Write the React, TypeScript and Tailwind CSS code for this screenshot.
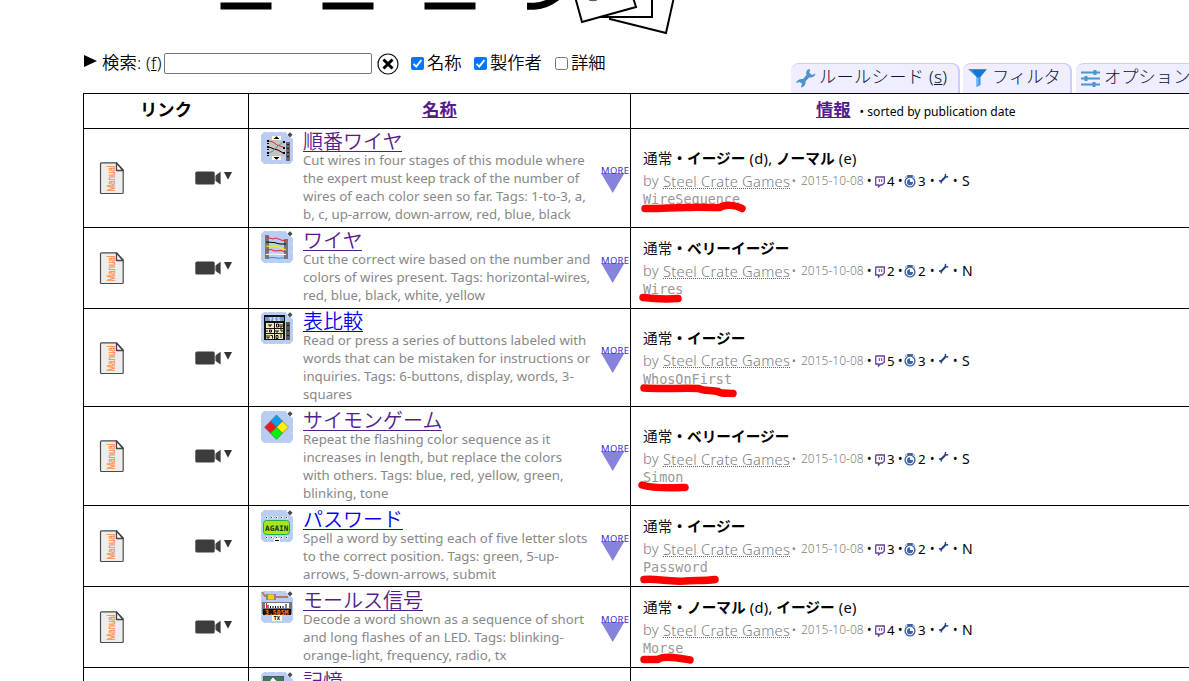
import React from "react";

type Diff = { name: string; mark?: string };
type Mod = {
  title: string;
  visited: boolean;
  height: string;
  pad: string;
  lines: string[];
  diffs: Diff[];
  twitch: string;
  timer: string;
  rule: string;
  id: string;
  stroke: string;
  icon: React.ReactNode;
};

const Manual = () => (
  <svg width="24" height="32" viewBox="0 0 24 32" className="shrink-0 overflow-visible">
    <path d="M1.500 .8h15L23.200 8v22.500a1 1 0 0 1-1 1H1.500a1 1 0 0 1-1-1V1.800a1 1 0 0 1 1-1Z" fill="#ededed" stroke="#4a4a4a" strokeWidth="1.200" />
    <path d="M16.500 1v7.500H23Z" fill="#fff" stroke="#444" strokeWidth="1.300" strokeLinejoin="round" />
    <text transform="translate(14.500 29.500) rotate(-90)" fontFamily="Liberation Sans, sans-serif" fontSize="11" textLength="26" lengthAdjust="spacingAndGlyphs" fill="#ff8a45" stroke="#ff8a45" strokeWidth=".3">Manual</text>
  </svg>
);

const Camera = () => (
  <svg width="38" height="16" viewBox="0 0 38 16" className="shrink-0">
    <rect x="0.3" y="1.600" width="19.400" height="13" rx="1.600" fill="#3c3c3c" />
    <path d="M19.800 6 25.600 1.800v12.800L19.800 10.400Z" fill="#3c3c3c" />
    <path d="M20.600 3v11" stroke="#fff" strokeOpacity=".5" />
    <path d="M29 2h8l-4 7.800Z" fill="#333" />
  </svg>
);

const Tile = ({ children }: { children: React.ReactNode }) => (
  <svg width="32" height="32" viewBox="0 0 32 32" className="shrink-0">
    <path d="M3 0h22l1.500 4L32 7v22l-3 3H3l-3-3V3Z" fill="#b9cdf2" />
    <path d="M1 .5h24M.5 2v28M2 31.500h28M31.500 8v22" stroke="#fff" strokeOpacity=".55" strokeDasharray="1 7" strokeDashoffset="3" />
    {children}
    <path d="m29 .2 2.600 2.600L29 5.400l-2.600-2.600Z" fill="#4b4d55" />
  </svg>
);

const icons = {
  sequence: (
    <Tile>
      <rect x="6" y="8" width="18" height="16" fill="#c4c4c4" />
      <path d="M11 4h9v4h-9zM11 24h9v4h-9z" fill="#fffbe6" />
      <path d="M12.500 7h6l-3-2.800zM12.500 25h6l-3 2.800z" fill="#000" />
      <path d="m8 9 4 1 4 3 6 2" stroke="#e8242c" fill="none" />
      <path d="m8 15 5 2 4 1 5 3" stroke="#000" fill="none" />
      <path d="m8 21 4-2 5-5 5-4" stroke="#13a0e2" fill="none" />
      <path d="M7 8v4M7 14v4M7 20v4M23 9v3M23 15v3M23 20v3" stroke="#000" strokeWidth="2" strokeDasharray="2 1" />
      <path d="M25 10h4v19h-4z" fill="#666" />
      <path d="M27 12v15" stroke="#111" strokeWidth="2" strokeDasharray="1 3" />
    </Tile>
  ),
  wires: (
    <Tile>
      <path d="M4 4h4v24H4zM23 8h4v20h-4z" fill="#757575" />
      <path d="m5 6 7 2 3-1 5 2 5 1" stroke="#e8242c" fill="none" />
      <path d="m5 11 8 .5 6 1.500h6" stroke="#000" fill="none" />
      <path d="m5 15 5 1 5-1 5 2 5 2" stroke="#ffee00" strokeWidth="1.200" fill="none" />
      <path d="m5 19 5-.5 4 1.500 6-.5 5 1.500" stroke="#e8242c" fill="none" />
      <path d="m5 23.500 8-.5 6 .5h6" stroke="#fff" fill="none" />
      <path d="m5 27 7-.5 6 .8 7-.8" stroke="#139ddd" fill="none" />
    </Tile>
  ),
  words: (
    <Tile>
      <path d="M3 3h21v7H3zM3 10h21v18H3z" fill="#111" />
      <path d="M4 5h19v4H4z" fill="#7197cf" />
      <text x="8" y="8.900" fontFamily="DejaVu Sans Mono, monospace" fontSize="5" fontWeight="700" textLength="11" fill="#fff">YES</text>
      <path d="M5 11h8v5H5zM14 11h8v5h-8zM5 17h8v4H5zM14 17h8v4h-8zM5 22h8v5H5zM14 22h8v5h-8z" fill="#f6e7b6" />
      <path d="M8 12v2h2v-2M15.500 12h2v3h-2zM19 12v3h2v-3M6 18v2M8.500 18h2v2h-2zM15 18v2h2v-2M19 18h2v2M6 23v3h2v-3M9.500 23.500h2v3M15 23.500h2v3h-2zM20 22v4" fill="none" stroke="#111" />
      <path d="M25 10h4v18h-4z" fill="#555" />
      <path d="M27 13v12" stroke="#111" strokeWidth="2" strokeDasharray="1 4" />
    </Tile>
  ),
  simon: (
    <Tile>
      <g stroke="#555" strokeWidth=".5">
        <path d="m15.500 4 6 6-6 6-6-6Z" fill="#0aa0ea" />
        <path d="m9.500 10.200 6 6-6 6-6-6Z" fill="#ee1823" />
        <path d="m21.500 10.200 6 6-6 6-6-6Z" fill="#fff200" />
        <path d="m15.500 16.400 6 6-6 6-6-6Z" fill="#08f208" />
      </g>
    </Tile>
  ),
  password: (
    <Tile>
      <path d="M5 7.500h22M5 27.500h22" stroke="#fffbe6" strokeWidth="2" strokeDasharray="2 3" />
      <path d="M5 7.500h22M5 27.500h22" stroke="#333" strokeDasharray="1 4" />
      <rect x="2.500" y="10.500" width="26" height="14" rx="3" fill="#a8e51c" stroke="#21ad4a" />
      <text x="4" y="20.500" fontFamily="DejaVu Sans Mono, monospace" fontSize="7.500" fontWeight="700" textLength="23.500" lengthAdjust="spacingAndGlyphs" fill="#143510">AGAIN</text>
      <path d="M13 28h6v4h-6z" fill="#fffbe6" />
      <path d="M14 30.500h4" stroke="#000" />
    </Tile>
  ),
  morse: (
    <Tile>
      <path d="m1 1 3 4h4M14 6h13" stroke="#b97a57" strokeWidth="2" fill="none" />
      <path d="M5 3h10v6H5z" fill="#888" />
      <path d="M7 3.500h6v5H7z" fill="#ffc90e" />
      <path d="M1 11h30v12H1z" fill="#777" />
      <path d="M4 12h24v5H4z" fill="#fff" />
      <path d="M7 14v3M9.500 15v2M12 15v2M14.500 15v2M17 15v2M19.500 15v2M22 15v2M25 13v4" stroke="#000" />
      <path d="M5.500 12v5" stroke="#ee1c24" />
      <path d="M2 18h28v6H2z" fill="#111" />
      <text x="4" y="23.500" fontFamily="DejaVu Sans Mono, monospace" fontSize="7" fontWeight="700" textLength="23.500" lengthAdjust="spacingAndGlyphs" fill="#ff7f27">3.505M</text>
      <path d="M11 24h10v6H11z" fill="#fffbe6" />
      <text x="12.500" y="29" fontFamily="DejaVu Sans Mono, monospace" fontSize="5.500" fontWeight="700" fill="#000">TX</text>
    </Tile>
  ),
  memory: (
    <Tile>
      <path d="M2 4h21v28H2z" fill="#555" />
      <path d="M3 5h19v27H3z" fill="#3f785c" />
      <path d="M12 6v8M10 9l2-2 3 3" stroke="#fff" strokeWidth="2" fill="none" />
    </Tile>
  ),
};

const mods: Mod[] = [
  {
    title: "順番ワイヤ", visited: true, height: "h-[99px]", pad: "pt-[3px]",
    lines: ["Cut wires in four stages of this module where", "the expert must keep track of the number of", "wires of each color seen so far. Tags: 1-to-3, a,", "b, c, up-arrow, down-arrow, red, blue, black"],
    diffs: [{ name: "イージー", mark: "d" }, { name: "ノーマル", mark: "e" }],
    twitch: "4", timer: "3", rule: "S", id: "WireSequence",
    stroke: "M5 7.500C20 8 36 6 50 6.500C63 6 77 7 80 6.500C85 3 96 4 102 7.500", icon: icons.sequence,
  },
  {
    title: "ワイヤ", visited: true, height: "h-[81px]", pad: "pt-[3px]",
    lines: ["Cut the correct wire based on the number and", "colors of wires present. Tags: horizontal-wires,", "red, blue, black, white, yellow"],
    diffs: [{ name: "ベリーイージー" }],
    twitch: "2", timer: "2", rule: "N", id: "Wires",
    stroke: "M3 6.500C13 7 21 9 38 7.500", icon: icons.wires,
  },
  {
    title: "表比較", visited: false, height: "h-[98px]", pad: "pt-[3px]",
    lines: ["Read or press a series of buttons labeled with", "words that can be mistaken for instructions or", "inquiries. Tags: 6-buttons, display, words, 3-", "squares"],
    diffs: [{ name: "イージー" }],
    twitch: "5", timer: "3", rule: "S", id: "WhosOnFirst",
    stroke: "M4 7C18 8 45 7 59 7.500C62 10 72 9 78 10.500C81 13 87 12 93 12.500", icon: icons.words,
  },
  {
    title: "サイモンゲーム", visited: true, height: "h-[99px]", pad: "pt-[4px]",
    lines: ["Repeat the flashing color sequence as it", "increases in length, but replace the colors", "with others. Tags: blue, red, yellow, green,", "blinking, tone"],
    diffs: [{ name: "ベリーイージー" }],
    twitch: "3", timer: "2", rule: "S", id: "Simon",
    stroke: "M2 6C14 10 31 9 45 8.500", icon: icons.simon,
  },
  {
    title: "パスワード", visited: false, height: "h-[81px]", pad: "pt-[4px]",
    lines: ["Spell a word by setting each of five letter slots", "to the correct position. Tags: green, 5-up-", "arrows, 5-down-arrows, submit"],
    diffs: [{ name: "イージー" }],
    twitch: "3", timer: "2", rule: "N", id: "Password",
    stroke: "M4 10.500C15 9 26 13 45 12C53 11 64 12 75 10.500", icon: icons.password,
  },
  {
    title: "モールス信号", visited: true, height: "h-[81px]", pad: "pt-[4px]",
    lines: ["Decode a word shown as a sequence of short", "and long flashes of an LED. Tags: blinking-", "orange-light, frequency, radio, tx"],
    diffs: [{ name: "ノーマル", mark: "d" }, { name: "イージー", mark: "e" }],
    twitch: "4", timer: "3", rule: "N", id: "Morse",
    stroke: "M4 9.500H18C24 5 38 8 50 10", icon: icons.morse,
  },
];

const Twitch = () => (
  <svg width="10" height="12" viewBox="0 0 10 12" className="mt-[1px]">
    <path d="M1 1h8.300v6L7 9H5.200L3.500 11V9H.7V2Z" fill="#fff" stroke="#6441a5" strokeWidth="1.300" />
    <path d="M4.300 3v3M6.700 3v3" stroke="#6441a5" />
  </svg>
);

const Timer = () => (
  <svg width="12" height="13" viewBox="0 0 12 13">
    <path d="M3.500.5h5v1h-5zM1.200 2.400l1.300-1.200M10.800 2.400 9.500 1.200" stroke="#3d62a8" fill="#3d62a8" />
    <circle cx="6" cy="7" r="4.900" fill="#fff" stroke="#3d62a8" strokeWidth="1.400" />
    <path d="M6 4.300V7h3A3 3 0 1 1 6 4.300Z" fill="#3d62a8" />
  </svg>
);

const Wrench = () => (
  <svg width="11" height="12" viewBox="0 0 11 12" className="-mt-[4px]">
    <path d="M3.200 8.200 7.300 4" stroke="#233e7c" strokeWidth="2" />
    <path d="M7.600 .8 7.200 4l3-.3M1 8l2.300-.2-.1 2.800" fill="none" stroke="#233e7c" strokeWidth="1.400" />
  </svg>
);

const Dot = ({ cls }: { cls: string }) => <span className={cls}>•</span>;

function Info({ m }: { m: Mod }) {
  return (
    <div className="h-[62px] w-[340px] whitespace-nowrap">
      <div className="h-6 text-[14.67px] leading-[22px] text-black">
        <span className="font-[350]">通常</span><b>・</b>
        {m.diffs.map((d, i) => (
          <React.Fragment key={d.name}>
            {i > 0 && ", "}
            <b>{d.name}</b>
            {d.mark && <span className="tracking-[0.3px]"> ({d.mark})</span>}
          </React.Fragment>
        ))}
      </div>
      <div className="flex h-5 items-center text-[14.67px] leading-5 text-[#808080]">
        <span className="w-[20px] -translate-y-px font-light tracking-[0.2px]">by</span>
        <span className="h-[17px] w-[127px] -translate-y-px border-b border-dotted border-[#666] leading-[18px] font-light tracking-[0.28px]">Steel Crate Games</span>
        <Dot cls="w-[11px] pl-[2px] text-[10px]" />
        <span className="w-[66px] text-[12px] font-light tracking-[0.02px]">2015-10-08</span>
        <Dot cls="w-[8px] text-[12px] text-black" />
        <Twitch />
        <span className="w-[13px] pl-[2px] text-[13.3px] text-black">{m.twitch}</span>
        <Dot cls="w-[6px] text-[12px] text-black" />
        <Timer />
        <span className="w-[14px] pl-[2px] text-[13.3px] text-black">{m.timer}</span>
        <Dot cls="w-[8px] text-[12px] text-black" />
        <Wrench />
        <Dot cls="w-[13px] pl-[4px] text-[12px] text-black" />
        <span className="text-[14px] text-black">{m.rule}</span>
      </div>
      <div className="relative h-[18px] font-['DejaVu_Sans_Mono',monospace] text-[13.45px] leading-[17px] text-[#999]">
        {m.id}
        <svg className="absolute top-[10px] -left-[3px] overflow-visible" width="110" height="18" viewBox="0 0 110 18">
          <path d={m.stroke} fill="none" stroke="#f00" strokeWidth="7.500" strokeLinecap="round" strokeLinejoin="round" />
        </svg>
      </div>
    </div>
  );
}

const More = () => (
  <svg width="29" height="30" viewBox="0 0 29 30" className="shrink-0 translate-y-px overflow-visible">
    <path d="M0 9h23.500L11.700 29Z" fill="#8683de" />
    <text x="0" y="10" fontFamily="Noto Sans, sans-serif" fontSize="9.400" textLength="28" fill="#3a2dbd">MORE</text>
  </svg>
);

const Row = ({ m }: { m: Mod }) => (
  <div className={`flex ${m.height} border-t border-black`}>
    <div className="flex w-[165px] items-center border-l border-black pl-4">
      <Manual />
      <div className="ml-[71px]"><Camera /></div>
    </div>
    <div className="flex w-[382px] border-l border-black pl-3">
      <div className={m.pad}>{m.icon}</div>
      <div className={`ml-[10px] w-[298px] whitespace-nowrap ${m.pad}`}>
        <div className="-mt-[3px] h-[22px] text-[20px] leading-[26px]">
          <a className={m.visited ? "inline-block h-[23px] border-b border-[#551a8b] font-[350] leading-[25px] text-[#551a8b]" : "inline-block h-[23px] border-b border-[#0000ee] font-[350] leading-[25px] text-[#0000ee]"}>{m.title}</a>
        </div>
        <div className="text-[13.26px] leading-[18px] text-[#888]">
          {m.lines.map((l) => <div key={l}>{l}</div>)}
        </div>
      </div>
      <div className="flex items-center"><More /></div>
    </div>
    <div className="flex flex-1 items-center border-l border-black pl-[12px]"><Info m={m} /></div>
  </div>
);

const Check = ({ on }: { on: boolean }) =>
  on ? (
    <span className="flex h-[13px] w-[13px] rounded-[2px] bg-[#0075ff]">
      <svg width="13" height="13" viewBox="0 0 13 13"><path d="m2.500 6.800 2.700 2.700 5.200-6.300" fill="none" stroke="#fff" strokeWidth="1.900" /></svg>
    </span>
  ) : (
    <span className="h-[13px] w-[13px] rounded-[2.500px] border border-[#767676] bg-white" />
  );

export default function App() {
  return (
    <div className="h-[681px] w-[1189px] overflow-hidden bg-white font-['Noto_Sans','Noto_Sans_CJK_JP',sans-serif] text-black">
      <svg className="block" width="1189" height="50" viewBox="0 0 1189 50">
        <g stroke="#000" strokeWidth="7">
          <path d="M220.500 6h51M322.500 6h51M424.500 6h51" />
          <path d="M527 6.200h7c9 0 18-4 28-13" fill="none" />
        </g>
        <g fill="#fff" stroke="#000" strokeWidth="2">
          <path d="m610 19 56 14 8-36-60-12Z" />
          <path d="M596 17h56V-9h-56Z" />
          <path d="m574-7 8 29 54-15-5-16Z" />
        </g>
        <path d="M589 0q4 1.500 8 0" fill="none" stroke="#444" />
      </svg>
      <div className="flex h-[43px] whitespace-nowrap">
        <div className="flex h-[27px] w-[791px] shrink-0 items-center pl-[84px] text-[17.3px] leading-[24px]">
          <svg width="13" height="12" viewBox="0 0 13 12" className="-mt-[5px] shrink-0"><path d="M0 0 13 6 0 12Z" /></svg>
          <span className="ml-[5px] w-[62px] shrink-0 -translate-y-px font-[350] tracking-[0.2px]">検索: (<u>f</u>)</span>
          <span className="h-[21px] w-[208px] shrink-0 rounded-[2px] border border-[#767676]" />
          <svg width="22" height="22" viewBox="0 0 22 22" className="ml-[5px] shrink-0">
            <circle cx="11" cy="11" r="10" fill="#fff" stroke="#111" strokeWidth="1.200" />
            <path d="m6.500 6.500 9 9m0-9-9 9" stroke="#000" strokeWidth="3" />
          </svg>
          <span className="ml-[12px] flex w-[63px] shrink-0 items-center gap-[3px]"><Check on /><span className="-translate-y-px font-[350]">名称</span></span>
          <span className="flex w-[81px] shrink-0 items-center gap-[3px]"><Check on /><span className="-translate-y-px font-[350]">製作者</span></span>
          <span className="flex shrink-0 items-center gap-[3px]"><Check on={false} /><span className="-translate-y-px font-[350]">詳細</span></span>
        </div>
        <div className="flex h-[30px] shrink-0 gap-[3px] self-end text-[17.3px] leading-[24px] font-light text-[#113]">
          <div className="flex w-[169px] items-start rounded-t-[8px] border-t border-r-2 border-[#ccf] bg-[#eef] pt-[1px] pl-[5px]">
            <svg width="20" height="20" viewBox="0 0 20 20" className="mt-[3px]">
              <path d="M19.500 5.500 16 7l-2.500-2L14 1C11 1 9.500 4 10.500 7L7 11c-3-.5-6 1-7 4l3.500-1L6 15.500 5 19.500c3-.5 5-3 4.500-6L13 9.500c3.500.5 6-1 6.500-4Z" fill="#4d91cf" />
            </svg>
            <span className="ml-[3px] tracking-[0.25px]">ルールシード (<u>s</u>)</span>
          </div>
          <div className="flex w-[109px] items-start rounded-t-[8px] border-t border-r-2 border-[#ccf] bg-[#eef] pt-[1px] pl-[5px]">
            <svg width="20" height="20" viewBox="0 0 20 20" className="mt-[3px]">
              <path d="M0 1h19l-6.500 8v8l-4 2V9Z" fill="#3792ed" /><path d="M4 2h14l-6 7H9Z" fill="#1675d1" /><path d="M8.500 10h2v7l-2 1Z" fill="#79baff" />
            </svg>
            <span className="ml-[4px]">フィルタ</span>
          </div>
          <div className="ml-[1px] flex w-[140px] items-start rounded-tl-[8px] border-t border-[#ccf] bg-[#eef] pt-[1px] pl-[5px]">
            <svg width="20" height="20" viewBox="0 0 20 20" className="mt-[3px]">
              <path d="M0 4.500h19M0 10.500h19M0 16.500h19" stroke="#4b94d2" strokeWidth="2" /><path d="M14 2v5M5 8v5M13 14v5" stroke="#4b94d2" strokeWidth="3" />
            </svg>
            <span className="ml-[3px]">オプション</span>
          </div>
        </div>
      </div>
      <div className="ml-[83px] w-[1120px]">
        <div className="flex h-[35px] border-t border-black text-[17.3px] leading-[32px] font-bold">
          <div className="w-[165px] border-l border-black text-center">リンク</div>
          <div className="w-[382px] border-l border-black text-center text-[#551a8b] underline">名称</div>
          <div className="flex flex-1 border-l border-black pl-[185px]">
            <span className="text-[#551a8b] underline">情報</span>
            <span className="ml-[9px] text-[12.1px] leading-[36px] font-normal">• sorted by publication date</span>
          </div>
        </div>
        {mods.map((m) => <Row key={m.id} m={m} />)}
        <div className="flex h-[81px] border-t border-black">
          <div className="w-[165px] border-l border-black" />
          <div className="flex w-[382px] border-l border-black pt-[4px] pl-3">
            {icons.memory}
            <a className="-mt-[3px] ml-[10px] text-[20px] leading-[26px] font-[350] text-[#551a8b]">記憶</a>
          </div>
          <div className="flex-1 border-l border-black" />
        </div>
      </div>
    </div>
  );
}
